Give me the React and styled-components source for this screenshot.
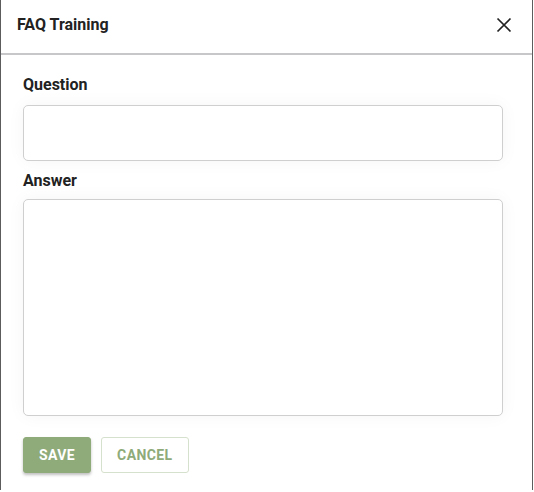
import React from "react";
import styled, { createGlobalStyle } from "styled-components";

const GlobalStyle = createGlobalStyle`
  body {
    margin: 0;
    background: #fff;
    font-family: Roboto, "Liberation Sans", sans-serif;
  }
`;

const Dialog = styled.div`
  width: 531px;
  height: 490px;
  border-left: 1px solid #5c5c5c;
  border-right: 1px solid #5c5c5c;
  background: #fff;
  display: flex;
  flex-direction: column;
`;

const Header = styled.div`
  height: 55px;
  box-sizing: border-box;
  border-bottom: 2px solid #c7c7ca;
  display: flex;
  align-items: center;
  justify-content: space-between;
  padding: 0 18px 4px 16px;
`;

const Title = styled.h2`
  margin: 0;
  font-size: 16px;
  font-weight: 700;
  color: #222;
`;

const CloseButton = styled.button`
  border: none;
  background: none;
  padding: 0;
  width: 20px;
  height: 20px;
  display: flex;
  align-items: center;
  justify-content: center;
  cursor: pointer;
`;

const Body = styled.div`
  padding: 20px 22px 0;
  display: flex;
  flex-direction: column;
`;

const Label = styled.label`
  font-size: 16px;
  font-weight: 700;
  color: #222;
  margin-bottom: ${(props) => props.mb}px;
  line-height: 20px;
`;

const Field = styled.textarea`
  display: block;
  width: 480px;
  height: ${(props) => props.h}px;
  box-sizing: border-box;
  border: 1px solid #cfcfcf;
  border-radius: 5px;
  resize: none;
  padding: 10px;
  font-family: inherit;
  font-size: 14px;
  box-shadow: 0 0 18px rgba(0, 0, 0, 0.045);
  margin-bottom: ${(props) => props.mb}px;
  outline: none;
`;

const Actions = styled.div`
  display: flex;
  gap: 10px;
`;

const Button = styled.button`
  height: 36px;
  padding: 0 15px;
  border-radius: 3px;
  font-family: inherit;
  font-size: 14px;
  font-weight: 700;
  letter-spacing: 0.4px;
  text-transform: uppercase;
  cursor: pointer;
  border: 1px solid ${(props) => (props.primary ? "#8fab79" : "#d6e1cd")};
  background: ${(props) => (props.primary ? "#8fab79" : "#fff")};
  color: ${(props) => (props.primary ? "#fff" : "#8fab79")};
  box-shadow: ${(props) =>
    props.primary ? "0 2px 3px rgba(0,0,0,0.25)" : "none"};
`;

export default function App() {
  return (
    <>
      <GlobalStyle />
      <Dialog>
        <Header>
          <Title>FAQ Training</Title>
          <CloseButton aria-label="close">
            <svg width="16" height="16" viewBox="0 0 16 16">
              <path
                d="M1.5 1.5 L14.5 14.5 M14.5 1.5 L1.5 14.5"
                stroke="#222"
                strokeWidth="1.7"
                fill="none"
              />
            </svg>
          </CloseButton>
        </Header>
        <Body>
          <Label mb={10}>Question</Label>
          <Field h={56} mb={10} />
          <Label mb={8}>Answer</Label>
          <Field h={217} mb={21} />
          <Actions>
            <Button primary>Save</Button>
            <Button>Cancel</Button>
          </Actions>
        </Body>
      </Dialog>
    </>
  );
}
